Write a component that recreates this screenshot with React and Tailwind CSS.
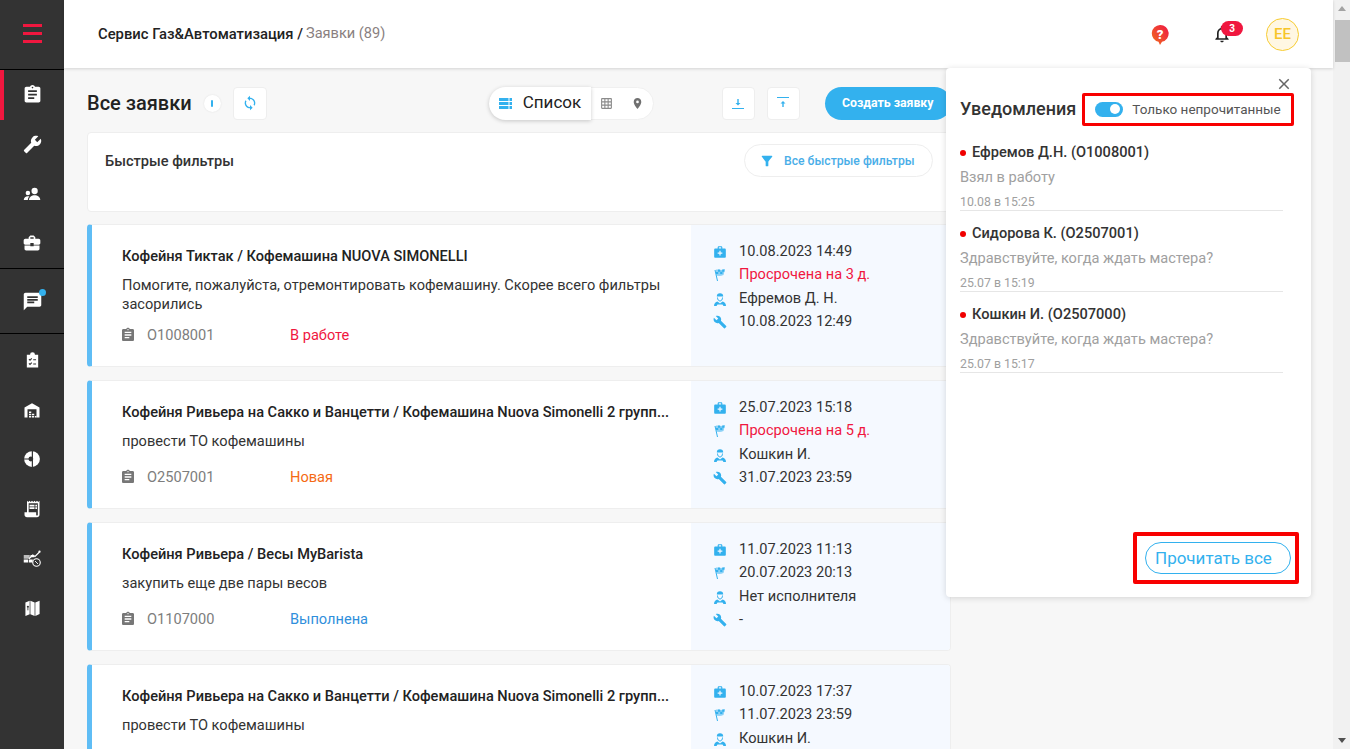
import React from 'react'
import {
    MdAssignment, MdBuild, MdBusinessCenter, MdChat, MdReceiptLong, MdSync, MdGridOn, MdLocationOn,
    MdFilterAlt, MdMedicalServices, MdClose, MdNotificationsNone
} from 'react-icons/md'

// icons the packages don't have in this shape
const WrenchIcon = ({ size }) => <MdBuild size={size} className="-scale-x-100" />

const PeopleIcon = ({ size }) => (
    <svg width={size} height={size} viewBox="0 0 24 24" fill="currentColor">
        <circle cx="15.5" cy="8" r="4.2" />
        <path d="M8 20c0-4 3.5-6.5 7.5-6.5S23 16 23 20z" />
        <circle cx="6.5" cy="10.5" r="3" />
        <path d="M1 20c0-3 2.5-5 5.5-5 .8 0 1.4.1 2 .3C7.2 16.500 6.500 18 6.500 20z" />
    </svg>
)

const ChecklistIcon = ({ size }) => (
    <svg width={size} height={size} viewBox="0 0 24 24">
        <path fill="currentColor" d="M4 4h4.500a3.500 3.500 0 0 1 7 0H20v18H4z" />
        <path fill="none" stroke="#333" strokeWidth="1.500" d="M7 10l1.500 1.500L11 9M7 16l1.500 1.500L11 15M13 11h4M13 17h4" />
    </svg>
)

const WarehouseIcon = ({ size }) => (
    <svg width={size} height={size} viewBox="0 0 24 24" fill="currentColor">
        <path d="M2 22V8.500L12 3l10 5.500V22h-4V11H6v11z" />
        <path d="M8 14h3v2H8zM8 17h3v2H8zM12 17h3v2h-3zM8 20h3v2H8zM12 20h3v2h-3zM16 20h2v2h-2z" />
    </svg>
)

const PieIcon = ({ size }) => (
    <svg width={size} height={size} viewBox="0 0 24 24">
        <circle cx="12" cy="12" r="10.500" fill="currentColor" />
        <path stroke="#333" strokeWidth="1.600" d="M12.500 1v22M1 12h11" />
        <circle cx="10.500" cy="12" r="3.200" fill="#333" />
    </svg>
)

const ChartIcon = ({ size }) => (
    <svg width={size} height={size} viewBox="0 0 24 24">
        <path fill="#bdbdbd" d="M1 8h8v5H1z" />
        <path fill="currentColor" d="M1 14h6v4H1zM8 14h5v4H8zM10 8h5v3h-5z" />
        <path fill="none" stroke="currentColor" strokeWidth="1.500" d="M8 13l5-5 3 2 6-6" />
        <circle cx="22" cy="3.500" r="1.500" fill="currentColor" />
        <circle cx="18" cy="18" r="5" fill="#333" stroke="currentColor" strokeWidth="1.500" />
        <path stroke="currentColor" strokeWidth="1.200" d="M16 16l4 4" />
    </svg>
)

const MapIcon = ({ size }) => (
    <svg width={size} height={size} viewBox="0 0 24 24">
        <path fill="currentColor" d="M2 5l6-2.500v19L2 24zM9 2.500l6 2.500v19l-6-2.500zM16 5l6-2.500V21l-6 3z" />
        <circle cx="5.500" cy="11" r="1.500" fill="#333" />
        <path stroke="#333" strokeWidth="1.200" d="M5.500 12v4" />
    </svg>
)

const FlagIcon = ({ size, className }) => (
    <svg width={size} height={size} viewBox="0 0 14 14" className={className}>
        <path stroke="currentColor" strokeWidth="1" d="M2 2l2.500 11" />
        <path fill="currentColor" d="M2.500 2c2-1 3.500 0 5 0 1.500 0 3-.5 4.500-1L10.500 7c-1.500.5-3 1-4.500 1-1 0-1.500-.3-2.500-.2z" opacity="0.550" />
        <path fill="currentColor" d="M5 1.500h2.200v2.200H5zM9.200 1.500h2.200v2.200H9.200zM3 4h2.200v2H3zM7.200 3.700h2.200v2.200H7.200z" />
    </svg>
)

const WorkerIcon = ({ size, className }) => (
    <svg width={size} height={size} viewBox="0 0 14 14" fill="none" className={className}>
        <path fill="currentColor" d="M3.800 4.500a3.200 3.200 0 0 1 6.400 0z" />
        <path stroke="currentColor" strokeWidth="1" d="M4.500 5.500c0 2 1 3.500 2.500 3.500s2.500-1.500 2.500-3.500" />
        <path fill="currentColor" d="M1 14c0-2.500 1.500-4 3.500-4.500L7 11.500l2.500-2c2 .5 3.500 2 3.500 4.500h-2.500l-1-1.500h-5l-1 1.500z" />
    </svg>
)

const ListIcon = () => (
    <svg width="13" height="11" viewBox="0 0 13 11" fill="#33b1ee">
        <path d="M0 0h9.500v3H0zM10.500 0H13v3h-2.500zM0 4h9.500v3H0zM10.500 4H13v3h-2.500zM0 8h9.500v3H0zM10.500 8H13v3h-2.500z" />
    </svg>
)

const ArrowLineIcon = ({ up }) => (
    <svg width="12" height="12" viewBox="0 0 12 12" fill="#33b1ee">
        {up ? (
            <path d="M0 0h12v1H0zM6 4l2.500 2.500H6.700V10H5.300V6.500H3.500z" />
        ) : (
            <path d="M0 11h12v1H0zM6 8.500L3.500 6h1.800V2h1.400v4h1.800z" />
        )}
    </svg>
)

const menuTop = [
    { icon: MdAssignment, size: 21, active: true },
    { icon: WrenchIcon, size: 19 },
    { icon: PeopleIcon, size: 18 },
    { icon: MdBusinessCenter, size: 20 },
]
const menuBottom = [
    { icon: ChecklistIcon, size: 17 },
    { icon: WarehouseIcon, size: 18 },
    { icon: PieIcon, size: 18 },
    { icon: MdReceiptLong, size: 20 },
    { icon: ChartIcon, size: 18 },
    { icon: MapIcon, size: 17 },
]

const orders = [
    {
        title: "Кофейня Тиктак / Кофемашина NUOVA SIMONELLI",
        text: "Помогите, пожалуйста, отремонтировать кофемашину. Скорее всего фильтры засорились",
        code: "O1008001", status: "В работе", statusColor: "text-[#f0173f]",
        created: "10.08.2023 14:49", deadline: "Просрочена на 3 д.", late: true, worker: "Ефремов Д. Н.", repair: "10.08.2023 12:49",
        height: "h-[143px]",
    },
    {
        title: "Кофейня Ривьера на Сакко и Ванцетти / Кофемашина Nuova Simonelli 2 групп...",
        text: "провести ТО кофемашины",
        code: "O2507001", status: "Новая", statusColor: "text-[#f56a14]",
        created: "25.07.2023 15:18", deadline: "Просрочена на 5 д.", late: true, worker: "Кошкин И.", repair: "31.07.2023 23:59",
        height: "h-[129px]",
    },
    {
        title: "Кофейня Ривьера / Весы MyBarista",
        text: "закупить еще две пары весов",
        code: "O1107000", status: "Выполнена", statusColor: "text-[#2f8fdc]",
        created: "11.07.2023 11:13", deadline: "20.07.2023 20:13", worker: "Нет исполнителя", repair: "-",
        height: "h-[129px]",
    },
    {
        title: "Кофейня Ривьера на Сакко и Ванцетти / Кофемашина Nuova Simonelli 2 групп...",
        text: "провести ТО кофемашины",
        code: "O1007000", status: "Новая", statusColor: "text-[#f56a14]",
        created: "10.07.2023 17:37", deadline: "11.07.2023 23:59", worker: "Кошкин И.", repair: "15.07.2023 23:59",
        height: "h-[129px]",
    },
]

const notifications = [
    { name: "Ефремов Д.Н. (O1008001)", text: "Взял в работу", time: "10.08 в 15:25" },
    { name: "Сидорова К. (O2507001)", text: "Здравствуйте, когда ждать мастера?", time: "25.07 в 15:19" },
    { name: "Кошкин И. (O2507000)", text: "Здравствуйте, когда ждать мастера?", time: "25.07 в 15:17" },
]

const Sidebar = () => (
    <aside className="w-16 shrink-0 bg-[#333333] flex flex-col text-white">
        <div className="h-[70px] shrink-0 flex items-center justify-center border-b border-black">
            <div className="w-[19px] flex flex-col gap-[5px] pb-[3px]">
                <span className="h-[3px] bg-[#f0173f]" />
                <span className="h-[3px] bg-[#f0173f]" />
                <span className="h-[3px] bg-[#f0173f]" />
            </div>
        </div>
        <div className="h-[199px] shrink-0 border-b border-black">
            {menuTop.map((item, i) => (
                <div key={i} className={`h-[49.5px] flex items-center justify-center ${item.active ? "border-l-4 border-[#f0173f] pr-1" : ""}`}>
                    <item.icon size={item.size} />
                </div>
            ))}
        </div>
        <div className="h-[65px] shrink-0 flex items-center justify-center border-b border-black">
            <div className="relative">
                <MdChat size={21} />
                <span className="absolute -top-[2px] -right-[3px] w-[7px] h-[7px] rounded-full bg-[#33b1ee]" />
            </div>
        </div>
        <div className="pt-[2px]">
            {menuBottom.map((item, i) => (
                <div key={i} className="h-[49.4px] flex items-center justify-center">
                    <item.icon size={item.size} />
                </div>
            ))}
        </div>
    </aside>
)

const Header = () => (
    <header className="h-[68px] shrink-0 bg-white shadow-[0_1px_3px_rgba(0,0,0,0.15)] flex items-center pl-[34px] relative z-10">
        <span className="text-[14.8px] font-medium text-[#222]">Сервис Газ&Автоматизация /</span>
        <span className="text-[14.6px] text-[#8a7f7f] ml-[3px]">Заявки (89)</span>
        <div className="ml-auto flex items-center">
            <svg width="18" height="20" viewBox="0 0 18 20" className="mr-[43px] mt-0.5">
                <defs>
                    <linearGradient id="help" x1="0" y1="1" x2="1" y2="0">
                        <stop offset="0" stopColor="#f0701f" />
                        <stop offset="1" stopColor="#ef1743" />
                    </linearGradient>
                </defs>
                <path d="M9 0a8.500 8.500 0 0 1 2 16.800L9 20l-1.500-3.200A8.500 8.500 0 0 1 9 0z" fill="url(#help)" />
                <text x="9" y="13.500" textAnchor="middle" fontSize="13" fontWeight="900" fill="#fff">?</text>
            </svg>
            <div className="relative mr-[34px] w-[20px] h-[20px]">
                <MdNotificationsNone size={20} className="text-[#222]" />
                <span className="absolute -top-[3px] left-[9px] w-[22px] h-[15px] rounded-full bg-[#f0173f] text-white text-[10px] font-bold leading-[15px] text-center">3</span>
            </div>
            <div className="w-[33px] h-[33px] rounded-full border border-[#f7cc32] bg-[#fff7e3] text-[#f7c52a] text-[15px] font-medium flex items-center justify-center mr-[34px]">EE</div>
        </div>
    </header>
)

const Toolbar = () => (
    <div className="h-[64px] pt-[6px] flex items-center">
        <h1 className="text-xl font-medium text-[#222] mr-[12px]">Все заявки</h1>
        <div className="w-[17px] h-[17px] rounded-full bg-white flex items-center justify-center mr-3 shadow-[0_0_2px_rgba(0,0,0,0.1)]">
            <span className="w-[2px] h-[7px] bg-[#33b1ee] rounded-sm" />
        </div>
        <button className="w-[34px] h-[33px] bg-white rounded border border-[#eeeeee] flex items-center justify-center text-[#33b1ee]">
            <MdSync size={16} />
        </button>
        <div className="ml-[222px] h-[33px] flex items-center rounded-full bg-white border border-[#f0f0f0] w-[165px]">
            <div className="h-[33px] w-[102px] -ml-px bg-white rounded-l-full shadow-[0_1px_4px_rgba(0,0,0,0.2)] flex items-center pl-[10px] gap-[11px]">
                <ListIcon />
                <span className="text-[17px] text-[#222]">Список</span>
            </div>
            <MdGridOn size={13} className="text-[#8a8a8a] ml-[9px]" />
            <MdLocationOn size={13} className="text-[#707070] ml-[18px]" />
        </div>
        <button className="ml-[68px] w-[33px] h-[33px] bg-white rounded border border-[#eeeeee] flex items-center justify-center">
            <ArrowLineIcon />
        </button>
        <button className="ml-3 w-[33px] h-[33px] bg-white rounded border border-[#eeeeee] flex items-center justify-center">
            <ArrowLineIcon up />
        </button>
        <button className="ml-[25px] w-[126px] h-[33px] rounded-full bg-[#33b1ee] text-white text-[12.3px] font-bold">Создать заявку</button>
    </div>
)

const InfoRow = ({ icon: Icon, children, className }) => (
    <div className="flex items-center h-[23.500px]">
        <Icon size={14} className="text-[#33b1ee] w-[14px] shrink-0" />
        <span className={`ml-[12px] text-[14.6px] ${className || "text-[#333]"}`}>{children}</span>
    </div>
)

const OrderCard = ({ order }) => (
    <div className={`${order.height} shrink-0 flex bg-white rounded border border-[#eeeeee] border-l-[5px] border-l-[#5fbdf5] overflow-hidden`}>
        <div className="flex-1 min-w-0 flex flex-col pl-[30px] pr-[18px] pt-[21px] pb-[21px]">
            <div className="text-[14.6px] font-medium text-[#222] truncate h-5 leading-5">{order.title}</div>
            <p className="text-[14.6px] text-[#333] leading-[19px] mt-[10px]">{order.text}</p>
            <div className="flex items-center mt-auto text-[14.6px] leading-5">
                <MdAssignment size={16} className="text-[#777] -ml-[2px]" />
                <span className="ml-[11px] w-[143px] text-[#7d7d7d]">{order.code}</span>
                <span className={order.statusColor}>{order.status}</span>
            </div>
        </div>
        <div className="w-[259px] shrink-0 bg-[#f5f9ff] pl-[22px] pt-[15px]">
            <InfoRow icon={MdMedicalServices}>{order.created}</InfoRow>
            <InfoRow icon={FlagIcon} className={order.late ? "text-[#f0173f]" : ""}>{order.deadline}</InfoRow>
            <InfoRow icon={WorkerIcon}>{order.worker}</InfoRow>
            <InfoRow icon={MdBuild}>{order.repair}</InfoRow>
        </div>
    </div>
)

const NotificationsPanel = () => (
    <div className="absolute left-[882px] top-0 w-[365px] h-[529px] bg-white rounded shadow-[0_1px_6px_rgba(0,0,0,0.15)] z-20 flex flex-col pl-[14px]">
        <MdClose size={18} className="absolute right-[18px] top-[7px] text-[#666]" />
        <div className="flex items-center h-[42px] mt-[20px]">
            <span className="text-lg font-medium text-[#333]">Уведомления</span>
            <div className="ml-[19px] flex items-center">
                <span className="relative w-7 h-[15px] rounded-full bg-[#33b1ee]">
                    <span className="absolute right-[3px] top-[2.500px] w-[10px] h-[10px] rounded-full bg-white" />
                </span>
                <span className="ml-[9px] text-[13.500px] text-[#555]">Только непрочитанные</span>
            </div>
        </div>
        <div className="mt-[11px] w-[323px]">
            {notifications.map((n) => (
                <div key={n.name} className="h-[70px] mb-[11px] border-b border-[#e6e6e6] pt-[2px]">
                    <div className="flex items-center h-5">
                        <span className="w-[6px] h-[6px] rounded-full bg-[#f00000]" />
                        <span className="ml-[6px] text-[14.6px] font-medium text-[#333]">{n.name}</span>
                    </div>
                    <div className="text-[14.6px] text-[#a0a0a0] mt-[4px] leading-5">{n.text}</div>
                    <div className="text-[12.3px] text-[#a0a0a0] mt-[7px] leading-4">{n.time}</div>
                </div>
            ))}
        </div>
        <button className="absolute left-[199px] top-[474px] w-[146px] h-[32px] rounded-full border border-[#33b1ee] text-[#33b1ee] text-[17px] text-left pl-[9px] leading-none">Прочитать все</button>
        <div className="absolute left-[136px] top-[25px] w-[212px] h-[33px] border-[3px] border-[#f80000] rounded-[2px]" />
        <div className="absolute left-[187px] top-[464px] w-[166px] h-[52px] border-4 border-[#f80000] rounded-[2px]" />
    </div>
)

const Scrollbar = () => (
    <div className="w-[17px] shrink-0 bg-[#f1f1f1] flex flex-col items-center">
        <div className="h-[17px] flex items-center justify-center">
            <span className="w-0 h-0 border-x-[4px] border-x-transparent border-b-[5px] border-b-[#a3a3a3]" />
        </div>
        <div className="w-[15px] self-end h-[42px] bg-[#c1c1c1] mt-[3px]" />
        <div className="mt-auto h-[17px] flex items-center justify-center">
            <span className="w-0 h-0 border-x-[4px] border-x-transparent border-t-[5px] border-t-[#505050]" />
        </div>
    </div>
)

export default function App() {
    return (
        <div className="w-full h-screen flex overflow-hidden bg-[#f7f7f7] font-['Roboto',sans-serif]">
            <Sidebar />
            <div className="flex-1 min-w-0 flex flex-col">
                <Header />
                <main className="relative flex-1 min-h-0 pl-[23px]">
                    <div className="w-[864px]">
                        <Toolbar />
                        <section className="h-[80px] bg-white rounded border border-[#eeeeee] flex justify-between pl-[17px] pr-[17px] pt-[11px]">
                            <span className="text-[14.6px] font-medium text-[#333] mt-[7px]">Быстрые фильтры</span>
                            <button className="h-[33px] w-[189px] rounded-full border border-[#eeeeee] flex items-center pl-[14px] pt-[1px] text-[12.2px] font-medium text-[#4aaee8]">
                                <MdFilterAlt size={16} className="text-[#33b1ee] mr-[9px]" />
                                Все быстрые фильтры
                            </button>
                        </section>
                        <div className="flex flex-col gap-[13px] mt-[12px]">
                            {orders.map((o) => <OrderCard key={o.code} order={o} />)}
                        </div>
                    </div>
                    <NotificationsPanel />
                </main>
            </div>
            <Scrollbar />
        </div>
    )
}
